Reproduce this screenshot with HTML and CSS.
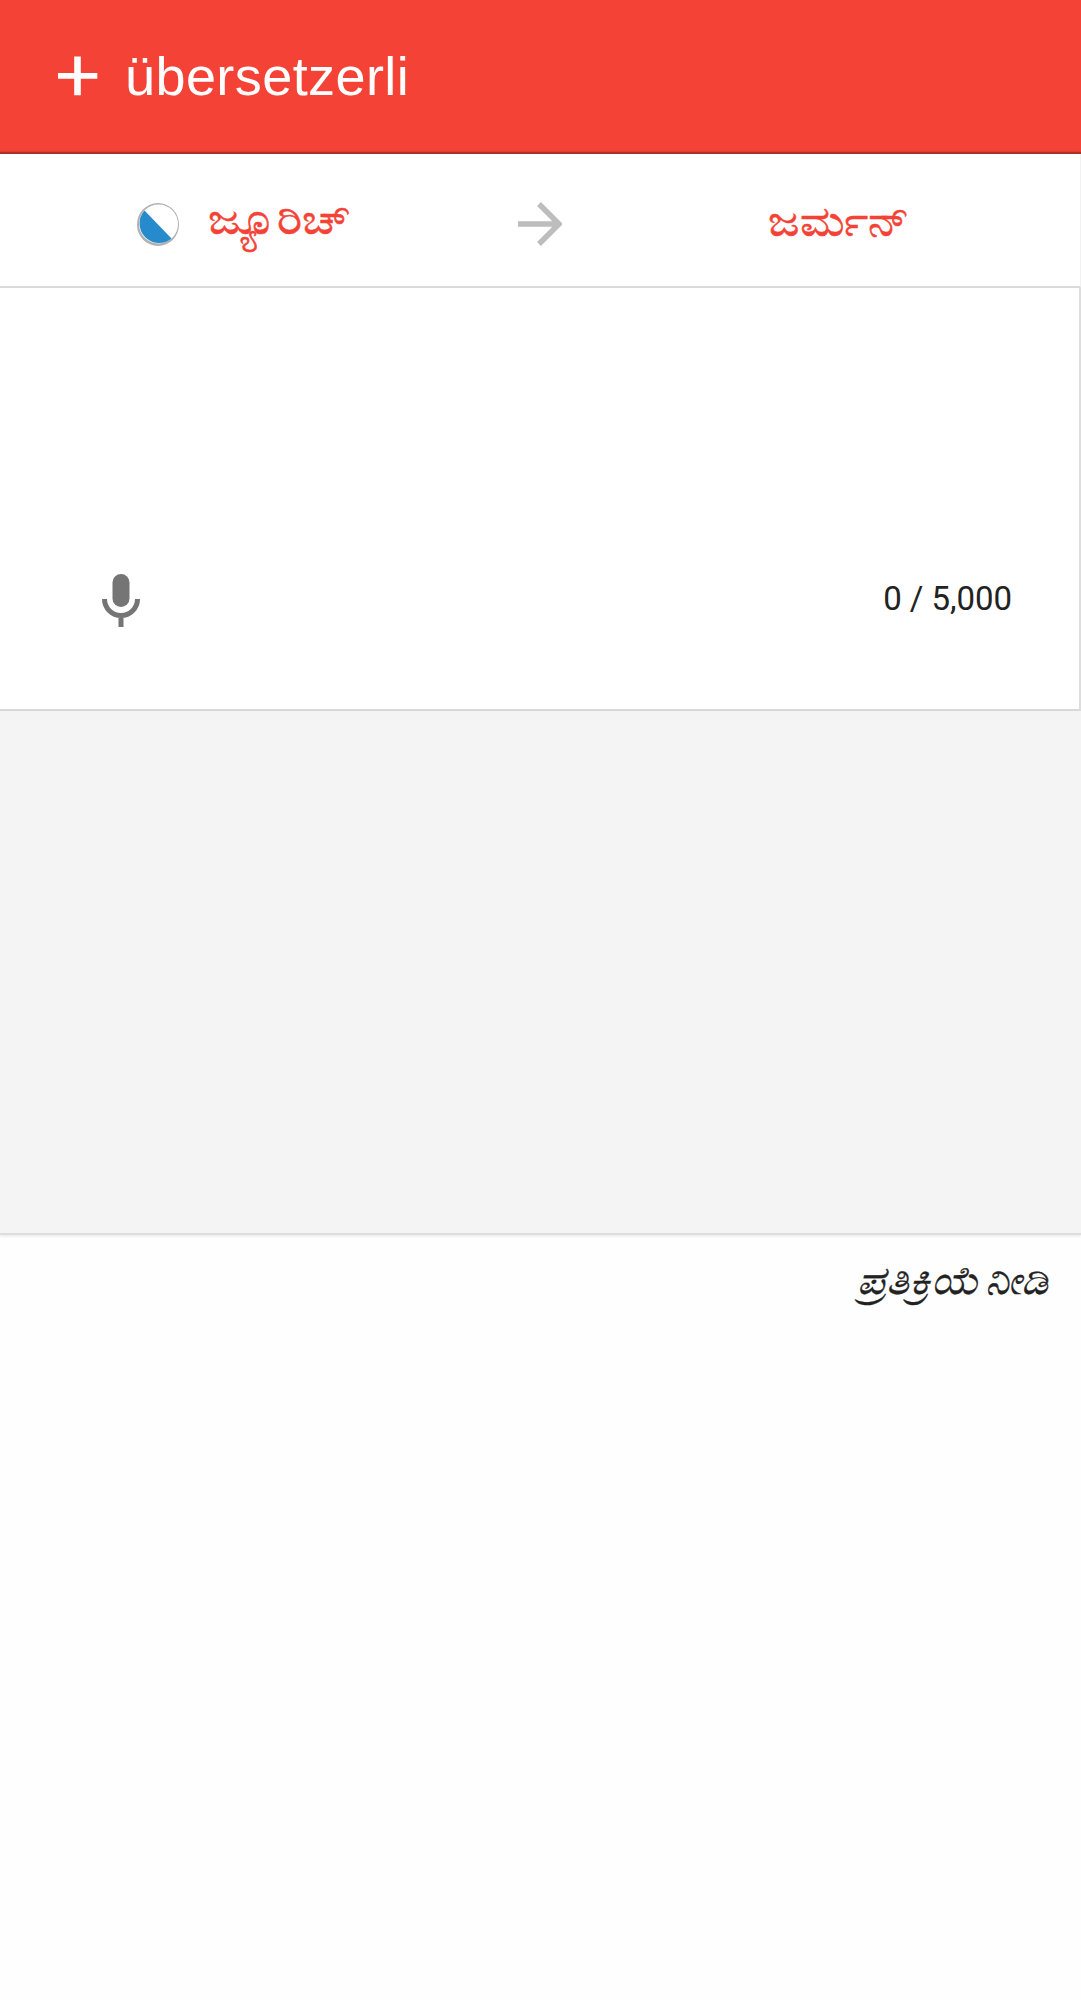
FILE: index.html
```html
<!DOCTYPE html>
<html lang="kn"><head><meta charset="utf-8"><title>übersetzerli</title><link rel="stylesheet" href="styles.css"></head>
<body>
<header class="top"><svg class="plus" viewBox="0 0 40 40"><path d="M16.2 .5H22.8V17H39.3V22.7H22.8V39.3H16.2V22.7H0V17H16.2Z"/></svg><h1>übersetzerli</h1></header>
<nav class="langs">
<div class="source"><svg class="flag" viewBox="0 0 42 43"><ellipse cx="21" cy="21.5" rx="21" ry="21.5" fill="#b0b0b0"/><circle cx="21.5" cy="21" r="19.5" fill="#fff"/><path d="M7.5 7.5A19.5 19.5 0 0 0 34.5 35.5Z" fill="#268bcc"/></svg><span class="name zurich">ಜ್ಯೂರಿಚ್</span></div>
<svg class="arrow" viewBox="0 0 44 44"><path d="M0 22H41M21 2L41 22L21 42"/></svg>
<div class="target"><span class="name german">ಜರ್ಮನ್</span></div>
</nav>
<main class="panel"><section class="input"><svg class="mic" viewBox="0 0 38 53"><rect x="10.5" y="0" width="17" height="33" rx="8.5" fill="#757575"/><path d="M2.5 25A16.5 16.5 0 0 0 35.5 25M19 41V53" fill="none" stroke="#757575" stroke-width="5"/></svg><span class="count">0 / 5,000</span></section></main>
<footer class="feedback"><span>ಪ್ರತಿಕ್ರಿಯೆ ನೀಡಿ</span></footer>
</body></html>
```
FILE: styles.css
```css
*{box-sizing:border-box}
body{margin:0;background:#fefefe;font-family:Roboto,"Noto Sans",sans-serif}
.top{height:154px;background:linear-gradient(#f44336 0,#f44336 150px,#d93c30 152px,#ad3026 152px);display:flex;align-items:center;padding:0 0 2px 58px;color:#fff}
.plus{width:40px;height:40px;fill:#fff}
h1{font:400 54px "Liberation Sans",sans-serif;letter-spacing:.42px;margin:0 0 0 27px}
.langs{height:134px;background:#fff;border-bottom:2px solid #ddd;border-right:1px solid #f1f1f1;display:grid;grid-template-columns:518px 44px 1fr;align-items:center;color:#f44336;padding-top:7px}
.source{display:flex;align-items:center;padding-left:137px;gap:29px}
.flag{width:42px;height:43px;margin-top:2px}
.name{display:inline-block;font-size:43px;line-height:48px;font-weight:500;transform-origin:left center;-webkit-text-stroke:.6px #f44336}
.zurich{transform:scaleX(1.105);margin-bottom:10px}
.german{transform:scaleX(1.09);margin-bottom:5px}
.arrow{width:44px;height:44px;fill:none;stroke:#bdbdbd;stroke-width:5.5}
.target{padding-left:206px}
.panel{height:947px;background:#f4f4f4;border-bottom:2px solid #dedede;box-shadow:0 1px 3px #0000001a}
.input{height:423px;background:#fff;border-right:2px solid #ddd;border-bottom:2px solid #d8d8d8;display:flex;justify-content:space-between;padding:286px 67px 0 102px}
.mic{width:38px;height:53px}
.count{font-size:33px;line-height:50px;letter-spacing:-.05px;color:#222}
.feedback{display:flex;justify-content:flex-end;font-style:italic;padding:22px 32px;color:#222}
.feedback span{font-size:39px;line-height:48px;word-spacing:-5px;transform:scaleX(1.1);transform-origin:right center;-webkit-text-stroke:.3px #222}
```
